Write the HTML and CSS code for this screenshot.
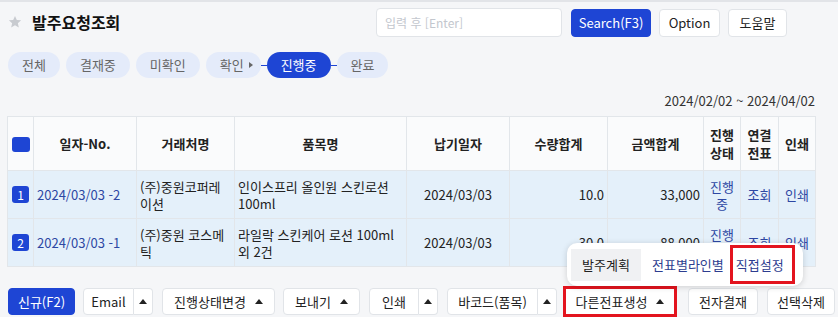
FILE: index.html
```html
<!DOCTYPE html>
<html lang="ko">

<head>
  <meta charset="utf-8" />
  <title>발주요청조회</title>
  <link rel="stylesheet" href="styles.css">
</head>

<body>
  <div class="topline"></div>

  <div class="head">
    <div class="title">
      <svg class="star" width="14" height="14" viewBox="0 0 24 24">
        <path d="M12 1.5l3.1 7 7.4.6-5.6 4.9 1.7 7.4L12 17.5 5.4 21.4l1.7-7.4L1.5 9.1l7.4-.6z" fill="#c8cbd0" />
      </svg>
      <h1>발주요청조회</h1>
    </div>
    <div class="search">
      <input type="text" placeholder="입력 후 [Enter]">
      <button class="btn primary">Search(F3)</button>
      <button class="btn">Option</button>
      <button class="btn">도움말</button>
    </div>
  </div>

  <div class="steps">
    <span class="step">전체</span>
    <span class="step">결재중</span>
    <span class="step">미확인</span>
    <span class="step arrowed">확인 <i class="tri-right"></i></span>
    <span class="link"></span>
    <span class="step on">진행중</span>
    <span class="link"></span>
    <span class="step">완료</span>
  </div>

  <div class="period">2024/02/02 ~ 2024/04/02</div>

  <table class="grid">
    <colgroup>
      <col style="width:26px">
      <col style="width:103px">
      <col style="width:98px">
      <col style="width:172px">
      <col style="width:103px">
      <col style="width:98px">
      <col style="width:96px">
      <col style="width:37px">
      <col style="width:38px">
      <col style="width:37px">
    </colgroup>
    <thead>
      <tr>
        <th><span class="chk"></span></th>
        <th>일자-No.</th>
        <th>거래처명</th>
        <th>품목명</th>
        <th>납기일자</th>
        <th>수량합계</th>
        <th>금액합계</th>
        <th>진행<br>상태</th>
        <th>연결<br>전표</th>
        <th>인쇄</th>
      </tr>
    </thead>
    <tbody>
      <tr>
        <td class="c"><span class="num">1</span></td>
        <td><a>2024/03/03 -2</a></td>
        <td>(주)중원코퍼레이션</td>
        <td>인이스프리 올인원 스킨로션 100ml</td>
        <td class="c">2024/03/03</td>
        <td class="r">10.0</td>
        <td class="r">33,000</td>
        <td class="c"><a>진행중</a></td>
        <td class="c"><a>조회</a></td>
        <td class="c"><a>인쇄</a></td>
      </tr>
      <tr>
        <td class="c"><span class="num">2</span></td>
        <td><a>2024/03/03 -1</a></td>
        <td>(주)중원 코스메틱</td>
        <td>라일락 스킨케어 로션 100ml 외 2건</td>
        <td class="c">2024/03/03</td>
        <td class="r">30.0</td>
        <td class="r">88,000</td>
        <td class="c"><a>진행중</a></td>
        <td class="c"><a>조회</a></td>
        <td class="c"><a>인쇄</a></td>
      </tr>
    </tbody>
  </table>

  <div class="toolbar">
    <button class="btn primary new">신규(F2)</button>
    <div class="split">
      <button class="btn w-email">Email</button><button class="btn arrow"><i class="tri-up"></i></button>
    </div>
    <button class="btn w-state">진행상태변경 <i class="tri-up"></i></button>
    <button class="btn w-send">보내기 <i class="tri-up"></i></button>
    <div class="split">
      <button class="btn w-print">인쇄</button><button class="btn arrow"><i class="tri-up"></i></button>
    </div>
    <div class="split">
      <button class="btn w-barcode">바코드(품목)</button><button class="btn arrow"><i class="tri-up"></i></button>
    </div>
    <div class="dropup">
      <div class="menu">
        <span class="item cur">발주계획</span>
        <span class="item">전표별라인별</span>
        <span class="item mark">직접설정</span>
      </div>
      <button class="btn mark-btn">다른전표생성 <i class="tri-up"></i></button>
    </div>
    <button class="btn w-appr">전자결재</button>
    <button class="btn w-del">선택삭제</button>
  </div>
</body>

</html>
```

FILE: styles.css
```css
html,
body {
  margin: 0;
  padding: 0;
}

body {
  width: 838px;
  height: 317px;
  overflow: hidden;
  background: #f5f6f8;
  font-family: "Noto Sans CJK KR", "Noto Sans", sans-serif;
  font-size: 13px;
  color: #222;
}

.topline {
  height: 2px;
  background: #e2e4e8;
}

/* 상단 */
.head {
  display: flex;
  align-items: center;
  padding: 6px 51px 0 8px;
}

.title {
  display: flex;
  align-items: center;
  gap: 10px;
  padding-bottom: 2px;
}

.title h1 {
  margin: 0;
  font-size: 16px;
  font-weight: 700;
  color: #111;
  line-height: 20px;
}

.search {
  display: flex;
  align-items: center;
  gap: 8px;
  margin-left: auto;
}

.search input {
  width: 186px;
  height: 29px;
  box-sizing: border-box;
  border: 1px solid #e1e4e8;
  border-radius: 4px;
  padding: 0 8px;
  font: inherit;
  font-size: 12px;
  background: #fff;
  margin-right: 1px;
}

.search input::placeholder {
  color: #c3c7ce;
}

.btn {
  height: 28px;
  box-sizing: border-box;
  border: 1px solid #e1e4e8;
  border-radius: 4px;
  background: #fff;
  font: inherit;
  font-size: 13px;
  color: #222;
  padding: 0 6px;
  display: inline-flex;
  align-items: center;
  justify-content: center;
  gap: 9px;
  white-space: nowrap;
}

.btn.primary {
  background: #1e45d4;
  border-color: #1e45d4;
  color: #fff;
}

.search .btn.primary {
  width: 80px;
}

.search .btn {
  width: 61px;
}

.search .btn:last-child {
  width: 59px;
}

/* 진행단계 */
.steps {
  display: flex;
  align-items: center;
  gap: 6px;
  padding: 0 8px;
  margin-top: 15px;
}

.step {
  height: 26px;
  min-width: 50px;
  box-sizing: border-box;
  justify-content: center;
  line-height: 26px;
  border-radius: 13px;
  background: #e4ebfa;
  color: #666;
  padding: 0 14px;
  display: inline-flex;
  align-items: center;
  gap: 5px;
}

.step.arrowed {
  padding-right: 8px;
}

.step.on {
  background: #1e45d4;
  color: #fff;
}

.steps .link {
  width: 6px;
  height: 1px;
  background: #1e45d4;
  margin: 0 -6px;
}

.tri-right {
  width: 0;
  height: 0;
  border-top: 3px solid transparent;
  border-bottom: 3px solid transparent;
  border-left: 4px solid #666;
}

.tri-up {
  width: 0;
  height: 0;
  border-left: 4px solid transparent;
  border-right: 4px solid transparent;
  border-bottom: 5px solid #222;
}

.period {
  text-align: right;
  padding-right: 23px;
  margin-top: 14px;
  line-height: 18px;
  color: #333;
}

/* 목록 */
.grid {
  margin: 6px 0 0 7px;
  width: 808px;
  border-collapse: collapse;
  table-layout: fixed;
}

.grid th,
.grid td {
  border: 1px solid #e2e6ea;
  padding: 0 3px;
  line-height: 17px;
}

.grid th {
  height: 53px;
  line-height: 18px;
  background: #fafbfc;
  font-weight: 700;
  color: #222;
  text-align: center;
}

.grid td {
  height: 47px;
  background: #e4f0fa;
  color: #222;
}

.grid td.c {
  text-align: center;
}

.grid td.r {
  text-align: right;
}

.grid a {
  color: #2d47a3;
}

.chk {
  display: inline-block;
  width: 18px;
  height: 15px;
  border-radius: 3px;
  background: #1e45d4;
  vertical-align: middle;
}

.num {
  display: inline-block;
  width: 17px;
  height: 17px;
  line-height: 17px;
  border-radius: 3px;
  background: #1e45d4;
  color: #fff;
  font-size: 12px;
  text-align: center;
}

/* 하단 버튼 */
.toolbar {
  display: flex;
  align-items: center;
  gap: 9px;
  padding: 0 0 0 8px;
  margin-top: 19px;
}

.toolbar > * {
  flex-shrink: 0;
}

.toolbar .btn {
  height: 27px;
}

.toolbar .new {
  width: 67px;
  margin-right: -1px;
}

.w-email {
  width: 51px;
}

.w-state {
  width: 113px;
  margin-right: -1px;
}

.w-send {
  width: 77px;
}

.w-print {
  width: 50px;
}

.w-barcode {
  width: 91px;
}

.w-appr {
  width: 70px;
}

.w-del {
  width: 68px;
}

.split {
  display: flex;
}

.split .btn:first-child {
  border-radius: 4px 0 0 4px;
}

.split .btn.arrow {
  border-left: none;
  border-radius: 0 4px 4px 0;
  width: 19px;
  padding: 0;
}

.dropup {
  position: relative;
  margin: 0 2px 0 -3px;
}

.btn.mark-btn {
  border: 3px solid #e3141e;
  height: 31px;
  width: 114px;
  border-radius: 0;
}

.menu {
  position: absolute;
  left: 4px;
  bottom: 31px;
  width: 236px;
  height: 43px;
  box-sizing: border-box;
  padding: 0 4px;
  background: #fff;
  border-radius: 10px;
  box-shadow: 0 1px 6px rgba(0, 0, 0, 0.16);
  display: flex;
  align-items: center;
  white-space: nowrap;
}

.menu .item {
  height: 32px;
  line-height: 32px;
  padding: 0 6px 0 11px;
  color: #2d3d8f;
  font-size: 13px;
}

.menu .item.cur {
  width: 70px;
  box-sizing: border-box;
  text-align: center;
  padding: 0;
  background: #f0f1f3;
  color: #222;
}

.menu .item.mark {
  border: 3px solid #e3141e;
  line-height: 33px;
  height: 39px;
  width: 65px;
  box-sizing: border-box;
  padding: 0 0 0 3px;
}
```
